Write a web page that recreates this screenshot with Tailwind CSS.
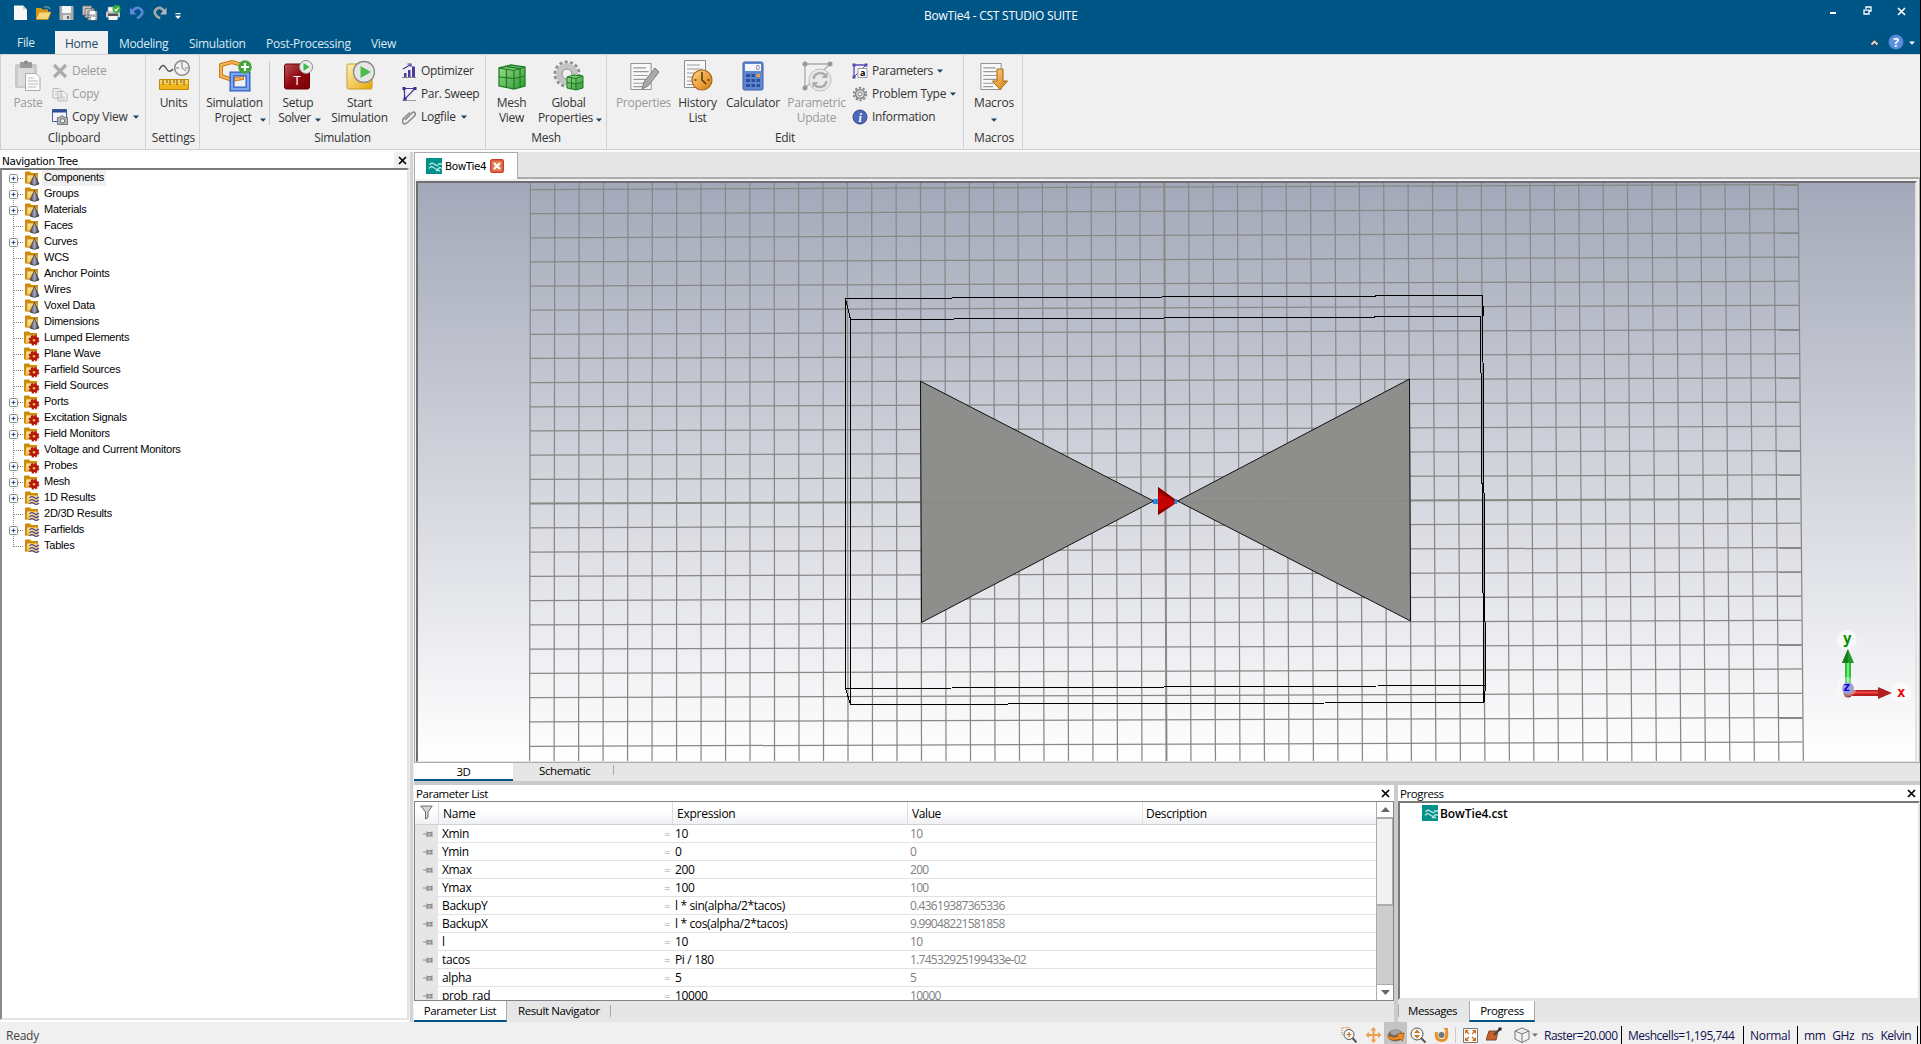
<!DOCTYPE html>
<html lang="en">
<head>
<meta charset="utf-8">
<title>BowTie4 - CST STUDIO SUITE</title>
<script src="https://cdn.jsdelivr.net/npm/@tailwindcss/browser@4"></script>
</head>
<body class="h-[1044px] bg-black overflow-hidden">
<svg width="0" height="0" class="absolute">
  <defs>
    <linearGradient id="gold" x1="0" y1="0" x2="1" y2="1"><stop offset="0" stop-color="#fdf0c0"/><stop offset="1" stop-color="#e5a800"/></linearGradient>
    <linearGradient id="grey" x1="0" y1="0" x2="0" y2="1"><stop offset="0" stop-color="#f4f4f4"/><stop offset="1" stop-color="#b0b0b0"/></linearGradient>
    <linearGradient id="red" x1="0" y1="0" x2="1" y2="1"><stop offset="0" stop-color="#b8555a"/><stop offset=".5" stop-color="#8f0a10"/><stop offset="1" stop-color="#7a0006"/></linearGradient>
    <linearGradient id="green" x1="0" y1="0" x2="1" y2="1"><stop offset="0" stop-color="#9bdc8c"/><stop offset="1" stop-color="#2f9a33"/></linearGradient>
    <linearGradient id="cone" x1="0" y1="0" x2="1" y2="0"><stop offset="0" stop-color="#3c3c44"/><stop offset=".5" stop-color="#a4a4c4"/><stop offset="1" stop-color="#303038"/></linearGradient>
    <linearGradient id="orange" x1="0" y1="0" x2="1" y2="1"><stop offset="0" stop-color="#ffd58a"/><stop offset="1" stop-color="#d97a08"/></linearGradient>
    <symbol id="folder" viewBox="0 0 16 15"><path d="M1 12.500V1.500q0-1 1-1h4l1.500 1.500h6.500v10z" fill="#cf8a06"/><path d="M2.500 12L3 4h10.500v8z" fill="url(#gold)" stroke="#c98a10" stroke-width=".8"/></symbol>
    <symbol id="f-geo" viewBox="0 0 16 15"><use href="#folder"/><path d="M10.500 3.500L6 13q4.200 2.700 9 0z" fill="url(#cone)" stroke="#3a3a3a" stroke-width=".8"/></symbol>
    <symbol id="f-gear" viewBox="0 0 16 15"><g transform="translate(-1 0)"><use href="#folder" width="16" height="15"/></g><circle cx="10" cy="9.300" r="4.300" fill="none" stroke="#a81212" stroke-width="2" stroke-dasharray="2 1.370"/><circle cx="10" cy="9.300" r="2.700" fill="none" stroke="#b81414" stroke-width="2.600"/></symbol>
    <symbol id="f-wave" viewBox="0 0 16 15"><use href="#folder"/><path d="M6 5.500h8v8H6z" fill="#fff" fill-opacity=".35"/><g fill="none" stroke="#4a4490" stroke-width="1.100"><path d="M5.500 7q2-2.500 4.500-.5t5-.5M5.500 10q2-2.500 4.500-.5t5-.5M5.500 13q2-2.500 4.500-.5t5-.5"/></g></symbol>
    <symbol id="cst" viewBox="0 0 16 16"><path d="M0 0h16v16H0z" fill="#00918b"/><g fill="none" stroke="#bfe6e2" stroke-width="1.300"><path d="M3.500 7q2-3 4.500-1t4.500 1.500M12 6h4M3 10.500q2-3 4.500-1t4 2q2-3 4.500-1M10 13q2-1.500 4 0"/></g></symbol>
    <symbol id="caret" viewBox="0 0 6 4"><path d="M0 .5h6L3 3.700z" fill="currentColor"/></symbol>
    <symbol id="x" viewBox="0 0 9 9"><path d="M1 1l7 7M8 1L1 8" stroke="currentColor" stroke-width="1.700"/></symbol>
    <symbol id="pin" viewBox="0 0 10 8"><path d="M0 4h4M4 1.500v5.500M9 1.500v5.500M4.500 2.500h4v3.500h-4z" stroke="#8c8c8c" fill="#b5b5b5"/></symbol>
    <symbol id="page" viewBox="0 0 22 28"><path d="M.5.5h21v27H.5z" fill="#f8f8f8" stroke="#8c8c8c"/><path d="M3 5h13M3 9h16M3 13h15M3 17h16M3 21h14M3 24.500h10" stroke="#999" stroke-width="1.200"/></symbol>
  </defs>
</svg>

<div class="flex h-[1044px] w-[1920px] flex-col overflow-hidden bg-[#f0f0f0] font-['Open_Sans','Noto_Sans',sans-serif] text-[12px] leading-[15px] tracking-[-0.3px] text-[#333]">

  <!-- title bar -->
  <header class="flex h-[54px] shrink-0 flex-col bg-[#005587] text-white">
    <div class="flex h-[31px]">
      <div class="flex w-[200px] pl-[12px] pt-[5px]">
        <svg class="mr-[5px] h-4 w-[18px]" viewBox="0 0 18 16"><path d="M2 .5h9l4 4V15H2z" fill="#f7f7f7"/><path d="M11 .5v4h4z" fill="#ccc"/></svg>
        <svg class="mr-[7px] h-4 w-[17px]" viewBox="0 0 17 16"><path d="M1 14V3h5l1.500 1.500H13V7" fill="#d99a18"/><path d="M1 14.500L4 7h12l-3 7.500z" fill="#fbd679" stroke="#c78813" stroke-width=".7"/><path d="M9 3q3-3 6 1" fill="none" stroke="#6f8ea8" stroke-width="1.300"/></svg>
        <svg class="mr-[8px] h-4 w-[15px]" viewBox="0 0 15 16"><path d="M.5 1h14v14H.5z" fill="#a9a9a9"/><path d="M3 1h9v7H3z" fill="#f5f5f5"/><path d="M4 10h7v5H4z" fill="#dedede"/><path d="M8 11h2v3H8z" fill="#666"/></svg>
        <svg class="mr-[7px] h-4 w-[16px]" viewBox="0 0 16 16"><g fill="#c4c4c4" stroke="#707070" stroke-width=".8"><path d="M.5 1h9v9h-9zM3 3.500h9v9H3zM6 6h9v9H6z"/></g><path d="M8 6h5v3.500H8zM9 12h4v3H9z" fill="#fff"/></svg>
        <svg class="mr-[9px] h-4 w-[16px]" viewBox="0 0 16 16"><path d="M3 2h8v5H3z" fill="#fafafa" stroke="#999" stroke-width=".7"/><rect x="1" y="6.500" width="14" height="6" rx="1" fill="#c9c9c9"/><path d="M3 8.500h10v3H3z" fill="#555"/><path d="M3.500 11h9v4h-9z" fill="#f5f5f5"/><circle cx="11.500" cy="4" r="4" fill="#3cab3c"/><path d="M9.500 4l1.500 1.800 2.500-3.300" stroke="#fff" stroke-width="1.200" fill="none"/></svg>
        <svg class="mr-[9px] h-4 w-[14px]" viewBox="0 0 14 16"><path d="M2.500 6Q7 .5 11 4.500T7 13.500" fill="none" stroke="#5c85dc" stroke-width="2.600"/><path d="M0 2.500V9.500h6.500z" fill="#5c85dc"/></svg>
        <svg class="mr-[8px] h-4 w-[14px]" viewBox="0 0 14 16"><path d="M11 6Q7 .5 3 4.500T7 13.500" fill="none" stroke="#a9a9a9" stroke-width="2.600"/><path d="M13.500 2.500V9.500H7z" fill="#b9b9b9"/></svg>
        <svg class="mt-[8px] h-[6px] w-[6px]" viewBox="0 0 6 6"><path d="M.5 0h5v1.200h-5zM0 2.800h6L3 6z" fill="#fff"/></svg>
      </div>
      <div class="flex-1 pl-[724px] pt-[8px] tracking-[-0.24px]">BowTie4 - CST STUDIO SUITE</div>
      <div class="flex items-start gap-[28px] pr-[15px] pt-[6px]">
        <svg class="mr-[-1px] h-[10px] w-[7px]" viewBox="0 0 7 10"><path d="M1 6h6v2H1z" fill="#fff"/></svg>
        <svg class="h-[9px] w-[9px]" viewBox="0 0 9 9"><path d="M3 3V1h5v4H6.500M1 4.200h5V8H1z" fill="none" stroke="#fff" stroke-width="1.300"/></svg>
        <svg class="mt-px mr-[-1px] ml-[-3px] h-[9px] w-[9px] text-white"><use href="#x"/></svg>
      </div>
    </div>
    <nav class="flex h-[23px] text-[#dce9f2]">
      <div class="w-[55px] pl-[17px] pt-[4px]">File</div>
      <div class="w-[53px] bg-[#f0f0f0] pt-[5px] text-center tracking-[-0.2px] text-[#24476b]">Home</div>
      <div class="w-[70px] pl-[11px] pt-[5px] tracking-[-0.35px]">Modeling</div>
      <div class="w-[77px] pl-[11px] pt-[5px] tracking-[-0.3px]">Simulation</div>
      <div class="w-[105px] pl-[11px] pt-[5px] tracking-[-0.25px]">Post-Processing</div>
      <div class="flex-1 pl-[11px] pt-[5px]">View</div>
      <svg class="mr-[9px] mt-[8px] h-[7px] w-[9px]" viewBox="0 0 9 7"><path d="M1.500 5.500l3-3 3 3" fill="none" stroke="#444" stroke-width="3.600"/><path d="M1.500 5.500l3-3 3 3" fill="none" stroke="#d5d5d5" stroke-width="1.900"/></svg>
      <svg class="mr-[5px] mt-[3px] h-4 w-4" viewBox="0 0 16 16"><circle cx="8" cy="8" r="7.600" fill="#4a80d0"/><circle cx="8" cy="8" r="6.500" fill="#5b90dc"/><text x="8" y="12.500" text-anchor="middle" font-size="12" font-weight="bold" fill="#fff">?</text></svg>
      <svg class="mr-[5px] mt-[10px] h-[4px] w-[6px] text-white"><use href="#caret"/></svg>
    </nav>
  </header>

  <!-- ribbon -->
  <section class="flex h-[98px] shrink-0 border-t border-[#d5d5d5] pb-[2px]">
    <div class="flex w-full border-b border-l border-[#cfcfcf] shadow-[0_2px_0_#fafafa]">
      <!-- clipboard -->
      <div class="flex w-[145px] flex-col border-r border-[#d2d2d2]">
        <div class="flex h-[75px] pt-[5px]">
          <div class="flex w-[51px] flex-col items-center pl-[3px] text-[#9a9a9a]">
            <svg class="mb-[3px] h-8 w-[28px]" viewBox="0 0 28 32"><rect x="1" y="4" width="22" height="24" rx="2" fill="#c9c9c9"/><path d="M4 8h16v18H4z" fill="#dcdcdc"/><rect x="6" y="2" width="12" height="6" rx="1" fill="#9a9a9a"/><circle cx="12" cy="2.500" r="2" fill="#8a8a8a"/><path d="M11.500 13.500H22l4 4v13H11.500z" fill="#fbfbfb" stroke="#aaa"/><path d="M14 18h6M14 21h10M14 24h10M14 27h8" stroke="#bbb"/></svg>
            <div>Paste</div>
          </div>
          <div class="-mt-px flex flex-col text-[#9a9a9a]">
            <div class="flex h-[23px] items-center gap-[4px]"><svg class="h-4 w-4" viewBox="0 0 16 16"><path d="M2 2l12 12M14 2L2 14" stroke="#ababab" stroke-width="3.200"/></svg>Delete</div>
            <div class="flex h-[23px] items-center gap-[4px]"><svg class="h-4 w-4" viewBox="0 0 16 16"><g fill="#f4f4f4" stroke="#b5b5b5"><path d="M1 2.500h6l2 2V12H1zM6 5.500h6l3 3V15H6z"/></g><path d="M8 9h3M8 11h5M8 13h5M3 5h3M3 7h2M3 9h2" stroke="#c5c5c5"/></svg>Copy</div>
            <div class="flex h-[23px] items-center gap-[4px] tracking-[-0.2px] text-[#333]"><svg class="h-4 w-4" viewBox="0 0 16 16"><path d="M.5.5h14v12H.5z" fill="#f4f4fb" stroke="#3c62a0"/><path d="M.5.5h14v3H.5z" fill="#2f4f96"/><path d="M5.500 8.500h2l1-1.500h3l1 1.500h3v7h-10z" fill="#b5b5b5" stroke="#666" stroke-width=".8"/><circle cx="10.500" cy="11.800" r="2.200" fill="#eee" stroke="#666"/></svg>Copy View<svg class="ml-[1px] h-[4px] w-[6px] text-[#1b4262]"><use href="#caret"/></svg></div>
          </div>
        </div>
        <div class="pl-[2px] text-center tracking-[-0.2px]">Clipboard</div>
      </div>
      <!-- settings -->
      <div class="flex w-[54px] flex-col border-r border-[#d2d2d2] pl-[2px]">
        <div class="flex h-[75px] flex-col items-center pt-[5px]">
          <svg class="mb-[3px] h-8 w-[32px]" viewBox="0 0 32 32"><path d="M1 10q4-8 7-2t7 1" fill="none" stroke="#555" stroke-width="1.400"/><circle cx="24" cy="8" r="7.300" fill="#f2f2f2" stroke="#8a8a8a" stroke-width="1.500"/><path d="M24 2v6l4 3M18 8h3M27 8h3" stroke="#777" fill="none"/><path d="M1.500 19.500h29v10h-29z" fill="#edb41c" stroke="#c08a0a"/><path d="M2 20h28v4H2z" fill="#f7d25c"/><path d="M5 20v5M9 20v3M12 20v5M16 20v3M19 20v5M23 20v3M26 20v5" stroke="#7a5a10"/></svg>
          <div>Units</div>
        </div>
        <div class="text-center tracking-[-0.15px]">Settings</div>
      </div>
      <!-- simulation -->
      <div class="flex w-[286px] flex-col border-r border-[#d2d2d2]">
        <div class="flex h-[75px] pt-[5px]">
          <div class="flex w-[69px] flex-col items-center text-center">
            <svg class="mb-[3px] h-8 w-[34px]" viewBox="0 0 34 32"><path d="M3 5l11-3 10 3v13l-10 2-11-4z" fill="none" stroke="#c97a10" stroke-width="4"/><path d="M3 5l11-3 10 3v13l-10 2-11-4z" fill="none" stroke="#f5b458" stroke-width="2"/><path d="M14 14h16v15H14z" fill="none" stroke="#2c5fc0" stroke-width="5"/><path d="M14 14h16v15H14z" fill="none" stroke="#7fa7f2" stroke-width="2.400"/><circle cx="27" cy="7" r="6.800" fill="#46a63c"/><path d="M27 3v8M23 7h8" stroke="#fff" stroke-width="2.200"/></svg>
            <div>Simulation</div>
            <div class="-ml-[4px] flex items-center">Project<svg class="ml-[8px] mt-[5px] -mr-[15px] h-[4px] w-[6px] text-[#1b4262]"><use href="#caret"/></svg></div>
          </div>
          <div class="mt-px h-[64px] w-px bg-[#c8c8c8]"></div>
          <div class="flex w-[56px] flex-col items-center">
            <svg class="mb-[3px] h-8 w-[30px]" viewBox="0 0 30 32"><rect x="1.500" y="4" width="25" height="25" rx="2" fill="url(#red)" stroke="#6a0005"/><text x="14" y="25" text-anchor="middle" font-size="13" fill="#fff">T</text><circle cx="23" cy="7" r="6.500" fill="#ececec" stroke="#8a8a8a"/><path d="M20.500 3v8l6-4z" fill="#3db54a"/></svg>
            <div>Setup</div>
            <div class="-ml-[4px] flex items-center">Solver<svg class="ml-[4px] mt-[5px] -mr-[7px] h-[4px] w-[6px] text-[#1b4262]"><use href="#caret"/></svg></div>
          </div>
          <div class="flex w-[67px] flex-col items-center text-center">
            <svg class="mb-[3px] h-8 w-[30px]" viewBox="0 0 30 32"><rect x="2" y="4" width="25" height="25" rx="1.500" fill="url(#gold)" stroke="#cf9a20"/><circle cx="19" cy="12" r="10.500" fill="#e6e6e6" stroke="#8a8a8a" stroke-width="1.300"/><path d="M15.500 6v12l10.500-6z" fill="#4dbb4d"/></svg>
            <div>Start</div><div>Simulation</div>
          </div>
          <div class="-mt-px flex flex-col pl-[9px]">
            <div class="flex h-[23px] items-center gap-[4px]"><svg class="h-4 w-[15px]" viewBox="0 0 15 16"><path d="M0 14.500h14" stroke="#888"/><path d="M2 10h2.500v4H2zM6 7h2.500v7H6zM10 3.500h3V14h-3z" fill="#4a3a9c"/><path d="M1 6l7-4M5.500 1H9v3" stroke="#4a3a9c" fill="none" stroke-width="1.200"/></svg>Optimizer</div>
            <div class="flex h-[23px] items-center gap-[4px] tracking-[-0.35px]"><svg class="h-4 w-[15px]" viewBox="0 0 15 16"><path d="M0 14.500h14" stroke="#999"/><path d="M2 2.500h11L3 13z M2.500 2v11" fill="none" stroke="#4a3a9c" stroke-width="1.200"/><path d="M.5 1h3v3h-3zM11.500 1h3v3h-3zM1.500 11.500h3v3h-3z" fill="#3d2f8c"/></svg>Par. Sweep</div>
            <div class="flex h-[23px] items-center gap-[4px]"><svg class="h-4 w-[15px]" viewBox="0 0 15 16"><path d="M3 11l7-7q2-2 3 0t-1 3.500l-6.500 6q-3 2.500-4.500.5t.5-4.500L8 3.500" fill="none" stroke="#858585" stroke-width="1.500"/></svg>Logfile<svg class="ml-px h-[4px] w-[6px] text-[#1b4262]"><use href="#caret"/></svg></div>
          </div>
        </div>
        <div class="text-center">Simulation</div>
      </div>
      <!-- mesh -->
      <div class="flex w-[121px] flex-col border-r border-[#d2d2d2]">
        <div class="flex h-[75px] pt-[5px]">
          <div class="flex w-[51px] flex-col items-center">
            <svg class="mb-[3px] h-8 w-[32px]" viewBox="0 0 32 32"><path d="M3 8l12-3 14 2v19l-11 3-15-3z" fill="url(#green)" stroke="#238028" stroke-width="1.300"/><path d="M3 8l15 2.500L29 7M18 10.500V29M3 17l15 1.500L29 16M10.500 9v18.500M9 6.500l15 2V27.500" fill="none" stroke="#1d7a24" stroke-width="1.200"/></svg>
            <div>Mesh</div><div>View</div>
          </div>
          <div class="flex w-[63px] flex-col items-center">
            <svg class="mb-[3px] h-8 w-[32px]" viewBox="0 0 32 32"><circle cx="14" cy="14" r="12" fill="none" stroke="#8d8d8d" stroke-width="3" stroke-dasharray="3 2.386"/><circle cx="14" cy="14" r="8" fill="none" stroke="#c4c4c4" stroke-width="6"/><circle cx="14" cy="14" r="5" fill="#f0f0f0" stroke="#8d8d8d"/><path d="M14 17l7-2 9 1v12l-7 2-9-2z" fill="url(#green)" stroke="#1d7a24"/><path d="M14 17l9 1.500 7-2.500M23 18.500V30M14 22.500l9 1.500 7-2M18.500 18v11" fill="none" stroke="#1d7a24"/></svg>
            <div>Global</div>
            <div class="-ml-[7px] flex items-center whitespace-nowrap">Properties<svg class="ml-[3px] mt-[5px] -mr-[10px] h-[4px] w-[6px] text-[#1b4262]"><use href="#caret"/></svg></div>
          </div>
        </div>
        <div class="text-center">Mesh</div>
      </div>
      <!-- edit -->
      <div class="flex w-[357px] flex-col border-r border-[#d2d2d2]">
        <div class="flex h-[75px] pl-[5px] pt-[5px]">
          <div class="flex w-[63px] flex-col items-center text-[#9a9a9a]">
            <svg class="mb-[3px] h-8 w-[32px]" viewBox="0 0 32 32"><use href="#page" x="2" y="3" width="22" height="27"/><path d="M14 29l2-7L27 8l4 4-11 14z" fill="#a9a9a9" stroke="#7d7d7d"/></svg>
            <div class="tracking-[-0.3px]">Properties</div>
          </div>
          <div class="flex w-[45px] flex-col items-center">
            <svg class="mb-[3px] h-8 w-[32px]" viewBox="0 0 32 32"><use href="#page" x="2" y="0" width="22" height="28"/><circle cx="20" cy="20" r="10" fill="url(#orange)" stroke="#a8671a" stroke-width="1.200"/><path d="M20 12v8l4 4M12.500 20h2M25.500 20h2" fill="none" stroke="#5a3508" stroke-width="1.500"/></svg>
            <div class="tracking-[-0.2px]">History</div><div>List</div>
          </div>
          <div class="flex w-[66px] flex-col items-center">
            <svg class="mb-[3px] h-8 w-[24px]" viewBox="0 0 24 32"><rect x="2" y="2" width="20" height="28" rx="1.500" fill="#5f86d0" stroke="#3a5ea8"/><path d="M4 4h16v7H4z" fill="#f2f5fc"/><text x="18.500" y="10" text-anchor="end" font-size="7" fill="#555">0</text><g fill="#2c4f98"><path d="M5 14h4v3H5zM10.500 14h3.500v3h-3.500zM5 19h4v3H5zM10.500 19h3.500v3h-3.500zM15.500 19h3.500v3h-3.500zM5 24h4v3H5zM10.500 24h3.500v3h-3.500zM15.500 24h3.500v3h-3.500z"/></g><path d="M15.500 14h3.500v3h-3.500z" fill="#e8a040"/></svg>
            <div class="tracking-[-0.25px]">Calculator</div>
          </div>
          <div class="flex w-[61px] flex-col items-center text-[#9a9a9a]">
            <svg class="mb-[3px] h-8 w-[32px]" viewBox="0 0 32 32"><path d="M4 28V4h25L4 28" fill="none" stroke="#a9a9a9" stroke-width="1.300"/><circle cx="4" cy="4" r="2.500" fill="#999"/><circle cx="29" cy="4" r="2.500" fill="#999"/><circle cx="4" cy="28" r="2.500" fill="#999"/><circle cx="19" cy="20" r="11" fill="#e9e9e9" stroke="#bdbdbd"/><path d="M12.500 19q1-6 7-6 3 0 4.500 2M25.500 21q-1 6-7 6-3 0-4.500-2" fill="none" stroke="#ababab" stroke-width="2.500"/><path d="M26.500 12v6h-6zM11.500 28v-6h6z" fill="#ababab"/></svg>
            <div>Parametric</div><div>Update</div>
          </div>
          <div class="-mt-px flex flex-col pl-[5px]">
            <div class="flex h-[23px] items-center gap-[4px]"><svg class="h-4 w-4" viewBox="0 0 16 16"><path d="M2 14V2h12" fill="none" stroke="#5548b8" stroke-width="1.300"/><path d="M2 14L14 2" stroke="#5548b8"/><path d="M.5.5h3v3h-3zM12.500.5h3v3h-3zM.5 12.500h3v3h-3z" fill="#5548b8"/><path d="M6 5.500h9v9H6z" fill="#fff" stroke="#999"/><text x="10.500" y="13" text-anchor="middle" font-size="9" font-weight="bold" fill="#000">a</text></svg><span class="tracking-[-0.42px]">Parameters</span><svg class="h-[4px] w-[6px] text-[#1b4262]"><use href="#caret"/></svg></div>
            <div class="flex h-[23px] items-center gap-[4px] tracking-[-0.27px]"><svg class="h-4 w-4" viewBox="0 0 16 16"><circle cx="8" cy="8" r="6.300" fill="none" stroke="#868686" stroke-width="1.800" stroke-dasharray="2.300 1.658"/><circle cx="8" cy="8" r="4.500" fill="#ddd" stroke="#868686" stroke-width="1.500"/><circle cx="8" cy="8" r="2" fill="#f5f5f5" stroke="#868686"/></svg>Problem Type<svg class="h-[4px] w-[6px] text-[#1b4262]"><use href="#caret"/></svg></div>
            <div class="flex h-[23px] items-center gap-[4px]"><svg class="h-4 w-4" viewBox="0 0 16 16"><circle cx="8" cy="8" r="7" fill="#4d68b8" stroke="#33468c"/><text x="8" y="12.500" text-anchor="middle" font-size="12" font-style="italic" font-weight="bold" font-family="Liberation Serif" fill="#fff">i</text></svg>Information</div>
          </div>
        </div>
        <div class="text-center">Edit</div>
      </div>
      <!-- macros -->
      <div class="flex w-[59px] flex-col border-r border-[#d2d2d2] pl-[2px]">
        <div class="flex h-[75px] flex-col items-center pt-[5px]">
          <svg class="mb-[3px] h-8 w-[32px]" viewBox="0 0 32 32"><use href="#page" x="2" y="3" width="22" height="27"/><path d="M19 9h6v12h4.500L22 29.500 14.500 21H19z" fill="url(#orange)" stroke="#a86a10"/></svg>
          <div class="tracking-[-0.2px]">Macros</div>
          <svg class="mt-[8px] h-[4px] w-[6px] text-[#1b4262]"><use href="#caret"/></svg>
        </div>
        <div class="text-center tracking-[-0.2px]">Macros</div>
      </div>
    </div>
  </section>

  <!-- workspace -->
  <main class="flex h-[870px] shrink-0 bg-[#f0f0f0]">
    <!-- navigation tree -->
    <aside class="flex w-[409px] flex-col bg-white font-['Liberation_Sans',sans-serif] text-[11px] tracking-[-0.23px] text-black">
      <div class="flex h-[16px] items-center justify-between pl-[2px] font-['DejaVu_Sans',sans-serif] text-[10.500px] tracking-[-0.4px]"><span class="pt-[3px]">Navigation Tree</span><span class="mr-[-2px] flex h-[16px] w-[17px] items-center justify-center bg-[#f0f0f0]"><svg class="h-[9px] w-[9px]"><use href="#x"/></svg></span></div>
      <div class="h-[852px] border-2 border-b-[#e3e3e3] border-l-[#8a8a8a] border-r-[#e3e3e3] border-t-[#7a7a7a] bg-white pl-[7px]" id="tree"></div>
    </aside>
    <div class="w-[5px] border-x border-[#f0f0f0] bg-[#d4d4d4]"></div>

    <div class="flex w-[1506px] flex-col bg-[#e6e6e6]">
      <!-- document tabs -->
      <div class="flex h-[27px] border-b-2 border-[#acacac]">
        <div class="flex h-[27px] w-[104px] items-center border border-b-0 border-[#acacac] bg-white pl-[11px] font-['DejaVu_Sans',sans-serif] text-[10.500px] tracking-[-0.45px] text-black">
          <svg class="mr-[3px] h-4 w-4"><use href="#cst"/></svg>BowTie4
          <svg class="ml-[4px] h-[14px] w-[14px]" viewBox="0 0 14 14"><rect x=".7" y=".7" width="12.600" height="12.600" rx="1.500" fill="#e07a50" stroke="#cf3c26" stroke-width="1.400"/><path d="M4 4l6 6M10 4l-6 6" stroke="#fff" stroke-width="2.300"/></svg>
        </div>
      </div>
      <!-- 3D view -->
      <div class="flex h-[584px] border-b border-l border-r border-[#acacac] bg-[#f0f0f0] pl-px pr-[2px] pt-[2px]">
        <div class="w-full border-b border-l-2 border-r-2 border-t-2 border-b-[#e3e3e3] border-l-[#6e6e6e] border-r-[#e3e3e3] border-t-[#6e6e6e]">
          <svg id="view" class="block h-full w-full bg-linear-to-b from-[#a3a9b9] via-[#d2d4dc] to-white" viewBox="418 183 1497 578" preserveAspectRatio="none">
            <g id="grid" fill="none" stroke="#888886"></g>
            <g fill="#8e8e8c" stroke="#000" stroke-width=".9">
              <path d="M920.500 381.200L1153.500 501 921.500 622.500z"/><path d="M1409.500 379L1177.500 501 1410.500 621z"/>
            </g>
            <g stroke="#777" stroke-opacity=".25"><path d="M921 503L1153 502M1178 502l232-1"/></g>
            <g fill="none" stroke="#000" stroke-width="1">
              <path shape-rendering="crispEdges" d="M845.500 298.500L1482.500 295.500 1485.500 685.500 845.500 688.500zM850.500 319.500L1480.500 316.500 1484 702.500 850.500 704.500zM845.500 298.500l5 21M1482.500 295.500l1 21M845.500 688.500l5 16M1485.500 685.500l-1.500 17"/>
            </g>
            <path d="M1153 499h24v5h-24z" fill="#2a88e0"/><path d="M1158 487l16.500 12v5L1158 515z" fill="#c40000"/><path d="M1158 487l16.500 12v2L1158 492zM1158 515l16.500-11-16.500 7z" fill="#8a0000"/>
            <g fill="#fff" fill-opacity=".65"><circle cx="1847" cy="640" r="10"/><circle cx="1901" cy="692" r="10"/></g>
            <circle cx="1848" cy="693" r="4.500" fill="#8a1c1c"/>
            <path d="M1845 662h6v22h-6z" fill="#2fbf3a"/><path d="M1847 662h2v22h-2z" fill="#6df27a"/><path d="M1848 649l6 14h-12z" fill="#1f9a2a"/><path d="M1848 649l0 14h-6z" fill="#1a7a22"/>
            <path d="M1850 690h29v6h-29z" fill="#b81c1c"/><path d="M1850 691.500h29v2h-29z" fill="#f04848"/><path d="M1892 693l-14-6v12z" fill="#b02020"/>
            <circle cx="1848" cy="688.500" r="6" fill="#7070b8"/><circle cx="1847" cy="687" r="10" fill="#fff" fill-opacity=".35"/>
            <g font-family="DejaVu Sans Mono" font-weight="bold" text-anchor="middle"><text x="1847" y="644" font-size="15" fill="#009000">y</text><text x="1901" y="697" font-size="14" fill="#f00000">x</text><text x="1846.500" y="691" font-size="12" fill="#0000f0">z</text></g>
          </svg>
        </div>
      </div>
      <!-- view tabs -->
      <div class="flex h-[18px] text-[11.500px] tracking-[-0.4px] text-black">
        <div class="w-[99px] border-b-2 border-[#005587] bg-white pt-px text-center">3D</div>
        <div class="flex-1 pl-[26px]"><span class="inline-block w-[74px]">Schematic</span><span class="inline-block h-[10px] w-px bg-[#aaa]"></span></div>
      </div>
      <div class="h-[4px] bg-[#cbcbcb]"></div>

      <!-- docked panels -->
      <div class="flex h-[237px]">
        <section class="flex w-[980px] flex-col text-[11.500px] text-black">
          <div class="flex h-[16px] items-center justify-between bg-white pl-[2px] pr-[4px] tracking-[-0.45px]"><span>Parameter List</span><svg class="h-[9px] w-[9px]"><use href="#x"/></svg></div>
          <div class="flex h-[200px] overflow-hidden border border-[#7f838c] bg-white">
            <div class="w-[961px]">
              <div class="flex h-[23px] items-center border-b border-[#cfd2d6] bg-linear-to-b from-white from-40% to-[#eff0f3] text-[12px] tracking-[-0.25px]">
                <div class="flex h-full w-[24px] justify-center border-r border-[#dcdcdc] pt-[3px]"><svg class="h-[15px] w-[13px]" viewBox="0 0 13 15"><path d="M.7 1h11.600L8 7v5.500L5.500 14V7z" fill="#d5d5d5" stroke="#6e6e6e"/></svg></div>
                <div class="h-full w-[234px] border-r border-[#dcdcdc] pl-[4px] pt-[4px]">Name</div>
                <div class="h-full w-[235px] border-r border-[#dcdcdc] pl-[4px] pt-[4px]">Expression</div>
                <div class="h-full w-[235px] border-r border-[#e4e4e4] pl-[4px] pt-[4px] tracking-[-0.4px]">Value</div>
                <div class="pl-[3px] tracking-[-0.3px]">Description</div>
              </div>
              <div id="params"></div>
            </div>
            <div class="flex w-[17px] flex-col border-l border-[#aaa] bg-[#cdcdcd]">
              <div class="flex h-[17px] items-center justify-center border-b-2 border-[#acacac] bg-white"><svg class="h-[5px] w-[9px]" viewBox="0 0 9 5"><path d="M4.500 0L9 5H0z" fill="#666"/></svg></div>
              <div class="h-[87px] border-b-2 border-r border-[#acacac] bg-[#f1f1f1]"></div>
              <div class="flex-1"></div>
              <div class="flex h-[16px] items-center justify-center border-t border-[#acacac] bg-white"><svg class="h-[5px] w-[9px]" viewBox="0 0 9 5"><path d="M4.500 5L9 0H0z" fill="#666"/></svg></div>
            </div>
          </div>
          <div class="flex h-[21px] tracking-[-0.4px]">
            <div class="w-[93px] border-b-2 border-r border-b-[#005587] border-r-[#aaa] bg-white pt-[2px] text-center">Parameter List</div>
            <div class="w-[103px] pl-[11px] pt-[2px]">Result Navigator</div>
            <div class="mt-[4px] h-[12px] w-px bg-[#aaa]"></div>
          </div>
        </section>
        <div class="w-[4px] bg-[#cbcbcb]"></div>
        <section class="flex flex-1 flex-col text-[11.500px] tracking-[-0.4px] text-black">
          <div class="flex h-[16px] items-center justify-between bg-white pl-[2px] pr-[4px]"><span>Progress</span><svg class="h-[9px] w-[9px]"><use href="#x"/></svg></div>
          <div class="h-[199px] border-2 border-b-[#e3e3e3] border-l-[#7a7a7a] border-r-[#e3e3e3] border-t-[#7a7a7a] bg-white pl-[22px] pt-[2px]">
            <div class="flex items-center gap-[2px] text-[12px] font-semibold tracking-[-0.1px]"><svg class="h-4 w-4"><use href="#cst"/></svg>BowTie4.cst</div>
          </div>
          <div class="flex h-[22px] pt-px">
            <div class="mt-[3px] h-[13px] w-px bg-[#aaa]"></div>
            <div class="w-[70px] pl-[9px] pt-[2px]">Messages</div>
            <div class="w-[66px] border-b-2 border-l border-r border-b-[#005587] border-l-[#aaa] border-r-[#aaa] bg-white pt-[2px] text-center">Progress</div>
          </div>
        </section>
      </div>
    </div>
  </main>

  <!-- status bar -->
  <footer class="flex h-[22px] shrink-0 items-center overflow-hidden whitespace-nowrap pt-[4px] tracking-[-0.5px] text-[#10104e]">
    <div class="w-[1341px] shrink-0 pl-[6px] tracking-[-0.25px] text-[#444]">Ready</div>
    <div class="flex w-[203px] shrink-0 items-center">
      <svg class="mr-[8px] h-4 w-4" viewBox="0 0 16 16"><path d="M1 8V.7h8" fill="none" stroke="#c87020" stroke-dasharray="1 1"/><circle cx="8" cy="7.500" r="5" fill="#f8f8f8" stroke="#555"/><path d="M8 5v5M5.500 7.500h5" stroke="#c06818" stroke-width="1.200"/><path d="M11.500 11l4 4.500" stroke="#555" stroke-width="2"/></svg>
      <svg class="h-4 w-[17px]" viewBox="0 0 16 16"><path d="M8 0l3 3.500H9V7h3.500V5L16 8l-3.500 3V9H9v3.500h2L8 16l-3-3.500h2V9H3.500v2L0 8l3.500-3v2H7V3.500H5z" fill="#eaa04a"/></svg>
      <div class="ml-[2px] -mt-[6px] flex h-[24px] w-[23px] items-end justify-center bg-[#c4c4c4]"><svg class="h-4 w-[18px]" viewBox="0 0 18 16"><ellipse cx="8.500" cy="7.500" rx="7.500" ry="6" fill="#6c6c6c"/><ellipse cx="8.500" cy="4.500" rx="5" ry="2.500" fill="#a5a5a5"/><path d="M1 6.500q3 4 10 2L10 6l7-1-1.500 8-2.500-2Q4 14 1 9.500z" fill="#f09020" stroke="#9a4a08" stroke-width=".7"/></svg></div>
      <svg class="ml-[3px] h-4 w-4" viewBox="0 0 16 16"><circle cx="7" cy="7" r="6" fill="#f8f8f8" stroke="#555"/><path d="M7 2.500L10 6H4zM7 11.500L10 8H4z" fill="#d07818"/><path d="M11 11l4.500 4.500" stroke="#555" stroke-width="2"/></svg>
      <svg class="ml-[8px] h-4 w-[15px]" viewBox="0 0 15 16"><path d="M2.500 5Q1 13 7.500 13.500T12.500 4" fill="none" stroke="#e8922a" stroke-width="3"/><path d="M9 1h5v5z" fill="#e8922a"/><circle cx="7.500" cy="8" r="3" fill="#777"/></svg>
      <div class="ml-[6px] h-[16px] w-px bg-[#ccc]"></div>
      <svg class="ml-[7px] h-[15px] w-[15px]" viewBox="0 0 15 15"><path d="M.5.5h14v14H.5z" fill="#fff" stroke="#777"/><path d="M2 2h4L2 6zM13 2v4L9 2zM2 13V9l4 4zM13 13H9l4-4z" fill="#d06a18"/><path d="M3 3l3 3M12 3L9 6M3 12l3-3M12 12L9 9" stroke="#d06a18" stroke-width="1.200"/></svg>
      <svg class="ml-[8px] h-4 w-[16px]" viewBox="0 0 16 16"><path d="M3 4h9l-2 9H0z" fill="#c8622a" stroke="#7a4a30"/><path d="M8 8l6-6" stroke="#444" stroke-width="2"/><circle cx="14" cy="2" r="1.800" fill="#333"/></svg>
      <svg class="ml-[12px] h-4 w-[16px]" viewBox="0 0 16 16"><path d="M1 4l7-3 7 3v8l-7 3.500L1 12zM1 4l7 3 7-3M8 7v8.500" fill="#f2f2f2" stroke="#777"/></svg>
      <svg class="ml-[2px] h-[4px] w-[6px] text-[#777]"><use href="#caret"/></svg>
    </div>
    <div class="w-[77px] shrink-0">Raster=20.000</div>
    <div class="h-[18px] w-px shrink-0 bg-black"></div>
    <div class="w-[121px] shrink-0 pl-[6px]">Meshcells=1,195,744</div>
    <div class="h-[18px] w-px shrink-0 bg-black"></div>
    <div class="w-[53px] shrink-0 pl-[6px] tracking-[-0.3px]">Normal</div>
    <div class="h-[18px] w-px shrink-0 bg-black"></div>
    <div class="flex w-[119px] shrink-0 gap-[7px] pl-[6px] tracking-[-0.45px]"><span>mm</span><span>GHz</span><span>ns</span><span>Kelvin</span></div>
    <div class="h-[18px] w-px shrink-0 bg-black"></div>
  </footer>
</div>

<script>
  // [label, icon, expandable]
  const nodes = [
    ['Components','geo',1],['Groups','geo',1],['Materials','geo',1],['Faces','geo',0],['Curves','geo',1],['WCS','geo',0],
    ['Anchor Points','geo',0],['Wires','geo',0],['Voxel Data','geo',0],['Dimensions','geo',0],['Lumped Elements','gear',0],
    ['Plane Wave','gear',0],['Farfield Sources','gear',0],['Field Sources','gear',0],['Ports','gear',1],['Excitation Signals','gear',1],
    ['Field Monitors','gear',1],['Voltage and Current Monitors','gear',0],['Probes','gear',1],['Mesh','gear',1],
    ['1D Results','wave',1],['2D/3D Results','wave',0],['Farfields','wave',1],['Tables','wave',0]];
  document.getElementById('tree').innerHTML = nodes.map(([label, icon, open], i) => {
    const last = i === nodes.length - 1;
    const guide = `<path d="M4.500 ${i ? 0 : 8}V${last ? 9 : 16}M5 8.500h11" stroke="#888" stroke-dasharray="1 1"/>`;
    const box = open ? '<rect x=".5" y="4.500" width="8" height="8" rx="1" fill="#fafafa" stroke="#8c8c8c"/><path d="M2.500 8.500h4M4.500 6.500v4" stroke="#2a4a9a"/>' : '';
    return `<div class="flex h-[16px] items-center"><svg class="h-4 w-[15px]" viewBox="0 0 15 16">${guide}${box}</svg>` +
      `<svg class="h-[15px] w-4"><use href="#f-${icon}"/></svg>` +
      `<span class="ml-[2px] h-[16px] px-[2px] leading-[15px] ${i ? '' : 'bg-[#f0f0f0]'}">${label}</span></div>`;
  }).join('');

  const params = [
    ['Xmin','10','10'],['Ymin','0','0'],['Xmax','200','200'],['Ymax','100','100'],
    ['BackupY','l * sin(alpha/2*tacos)','0.43619387365336'],['BackupX','l * cos(alpha/2*tacos)','9.99048221581858'],
    ['l','10','10'],['tacos','Pi / 180','1.74532925199433e-02'],['alpha','5','5'],['prob_rad','10000','10000']];
  document.getElementById('params').innerHTML = params.map(([n, e, v]) =>
    `<div class="flex h-[18px] items-center border-b border-[#e2e2e2] text-[12px] leading-[16px] tracking-[-0.35px]">` +
    `<div class="flex h-[18px] w-[23px] items-center justify-center bg-[#e6e6e6] pl-[3px] pt-px"><svg class="h-[8px] w-[10px]"><use href="#pin"/></svg></div>` +
    `<div class="w-[226px] pl-[4px]">${n}</div><div class="w-[11px] text-[11px] text-[#999]">=</div>` +
    `<div class="w-[235px]">${e}</div><div class="tracking-[-0.72px] text-[#808080]">${v}</div></div>`).join('');

  // ground grid in slight perspective
  let g = '';
  for (let i = 0; i <= 52; i++) {
    const x1 = 530.4 + i * 24.38, x2 = 529.6 + i * 24.495;
    g += `<path d="M${x1} 183L${x2} 761" stroke-width="${i === 26 ? 2 : 1.25}"/>`;
  }
  for (let k = -13; k <= 10; k++) {
    const d = 24.22 * k + 0.005 * k * k;
    g += `<path d="M530 ${503.6 + d}L${1800.5 + k * 0.2} ${499 + d * 1.001}" stroke-width="${k ? 1.25 : 2}"/>`;
  }
  document.getElementById('grid').innerHTML = g;
</script>
</body>
</html>
